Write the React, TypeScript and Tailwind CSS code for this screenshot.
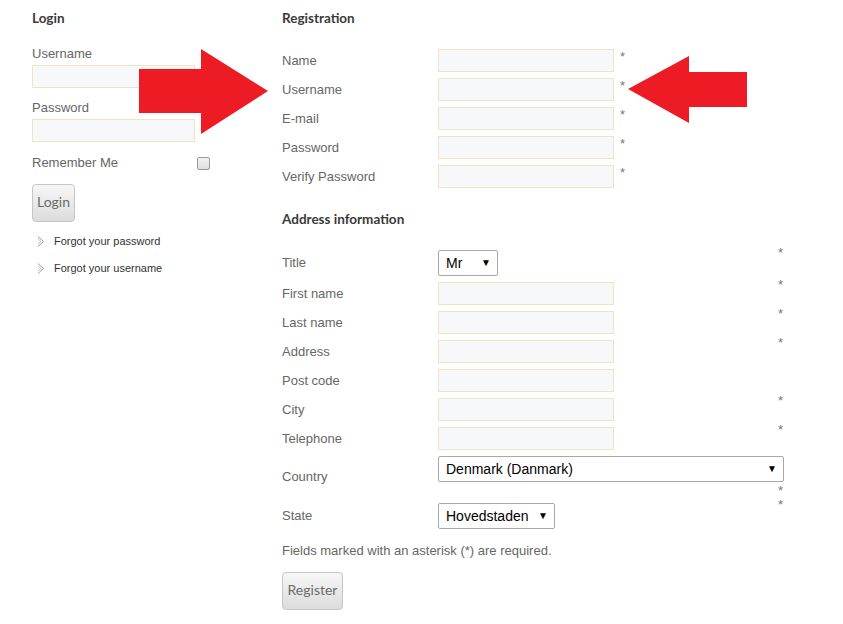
import React from "react";

const label = "text-[13px] leading-[18px] text-[#666]";
const field = "h-[23px] border border-[#f3e2c6] bg-[#f6f8fa]";

function Star({ className = "" }: { className?: string }) {
    return <span className={`text-[13px] leading-[13px] text-[#777] ${className}`}>*</span>;
}

function FakeSelect({ value, width }: { value: string; width: string }) {
    return (
        <div className={`${width} h-[26px] flex items-center justify-between pl-[7px] pr-[6px] border border-[#a8a8a8] rounded-[2px] bg-white text-[14px] text-black`}>
            <span>{value}</span>
            <span className="text-[10px] leading-none">▼</span>
        </div>
    );
}

function Chevron() {
    return (
        <svg width="8" height="11" viewBox="0 0 8 11" className="mr-[9px]">
            <polyline points="1,0.5 6.5,5.5 1,10.5" fill="none" stroke="#9a9a9a" strokeWidth="1" />
            <polyline points="1,3 4,5.5 1,8" fill="none" stroke="#c4c4c4" strokeWidth="1" />
        </svg>
    );
}

function GrayButton({ children, width }: { children: React.ReactNode; width: string }) {
    return (
        <button className={`${width} h-[38px] pb-[3px] rounded-[4px] border border-[#c6c6c6] bg-gradient-to-b from-[#f7f7f7] to-[#dcdcdc] text-[14px] text-[#6a6a6a] font-[Lato,sans-serif]`}>
            {children}
        </button>
    );
}

const regRows = ["Name", "Username", "E-mail", "Password", "Verify Password"];

const addrRows: { name: string; star: boolean }[] = [
    { name: "First name", star: true },
    { name: "Last name", star: true },
    { name: "Address", star: true },
    { name: "Post code", star: false },
    { name: "City", star: true },
    { name: "Telephone", star: true },
];

export default function App() {
    return (
        <div className="relative w-[843px] h-[624px] bg-white flex font-['Liberation_Sans',Arial,sans-serif] overflow-hidden">
            {/* login column */}
            <div className="w-[282px] pl-8 pt-2 flex flex-col">
                <h3 className="text-[13.5px] leading-[20px] font-bold text-[#3a3a3a] font-[Lato,sans-serif]">Login</h3>
                <div className={`${label} mt-[17px]`}>Username</div>
                <div className={`${field} w-[163px] mt-[2px]`} />
                <div className={`${label} mt-[11px]`}>Password</div>
                <div className={`${field} w-[163px] mt-[2px]`} />
                <div className="flex items-center mt-3 h-[18px]">
                    <span className={`${label} w-[165px]`}>Remember Me</span>
                    <span className="w-[13px] h-[13px] rounded-[2px] border border-[#9a9a9a] bg-gradient-to-b from-[#f4f4f4] to-[#dedede]" />
                </div>
                <div className="mt-3">
                    <GrayButton width="w-[43px]">Login</GrayButton>
                </div>
                <div className="mt-[10px] flex flex-col gap-[9px] pl-[5px]">
                    <div className="flex items-center text-[11px] leading-[18px] text-[#333]">
                        <Chevron />
                        <span>Forgot your password</span>
                    </div>
                    <div className="flex items-center text-[11px] leading-[18px] text-[#333]">
                        <Chevron />
                        <span>Forgot your username</span>
                    </div>
                </div>
            </div>

            {/* registration column */}
            <div className="w-[520px] pt-2 flex flex-col">
                <h3 className="text-[13.5px] leading-[20px] font-bold text-[#3a3a3a] font-[Lato,sans-serif]">Registration</h3>
                <div className="mt-[21px] flex flex-col gap-[6px]">
                    {regRows.map((r) => (
                        <div key={r} className="flex items-center h-[23px]">
                            <span className={`${label} w-[156px]`}>{r}</span>
                            <div className={`${field} w-[176px]`} />
                            <Star className="self-start mt-[1px] ml-[6px]" />
                        </div>
                    ))}
                </div>

                <h3 className="mt-[21px] text-[13.5px] leading-[20px] font-bold text-[#3a3a3a] font-[Lato,sans-serif]">Address information</h3>
                <div className="mt-[21px] flex flex-col gap-[6px]">
                    <div className="flex items-center h-[26px]">
                        <span className={`${label} w-[156px]`}>Title</span>
                        <div className="w-[346px] h-full flex justify-between">
                            <FakeSelect value="Mr" width="w-[60px]" />
                            <Star className="pr-[1px] -mt-[4px]" />
                        </div>
                    </div>
                    {addrRows.map((r) => (
                        <div key={r.name} className="flex items-center h-[23px]">
                            <span className={`${label} w-[156px]`}>{r.name}</span>
                            <div className="w-[346px] h-full flex justify-between">
                                <div className={`${field} w-[176px]`} />
                                {r.star && <Star className="pr-[1px] -mt-[4px]" />}
                            </div>
                        </div>
                    ))}
                    <div className="flex items-center h-[41px]">
                        <span className={`${label} w-[156px]`}>Country</span>
                        <div className="w-[346px] h-full flex flex-col">
                            <FakeSelect value="Denmark (Danmark)" width="w-full" />
                            <div className="flex justify-end mt-[2px]">
                                <Star className="pr-[1px]" />
                            </div>
                        </div>
                    </div>
                    <div className="flex items-center h-[26px]">
                        <span className={`${label} w-[156px]`}>State</span>
                        <div className="w-[346px] h-full flex justify-between">
                            <FakeSelect value="Hovedstaden" width="w-[117px]" />
                            <Star className="pr-[1px] -mt-[5px]" />
                        </div>
                    </div>
                </div>
                <p className={`${label} mt-[13px]`}>Fields marked with an asterisk (*) are required.</p>
                <div className="mt-3">
                    <GrayButton width="w-[61px]">Register</GrayButton>
                </div>
            </div>

            {/* red annotation arrows */}
            <svg className="absolute left-0 top-0 pointer-events-none" width="843" height="624">
                <polygon points="139,69 201,69 201,49 268,91 201,134 201,113 139,113" fill="#ed1c24" />
                <polygon points="747,72 689,72 689,56 628,89 689,123 689,107 747,107" fill="#ed1c24" />
            </svg>
        </div>
    );
}
